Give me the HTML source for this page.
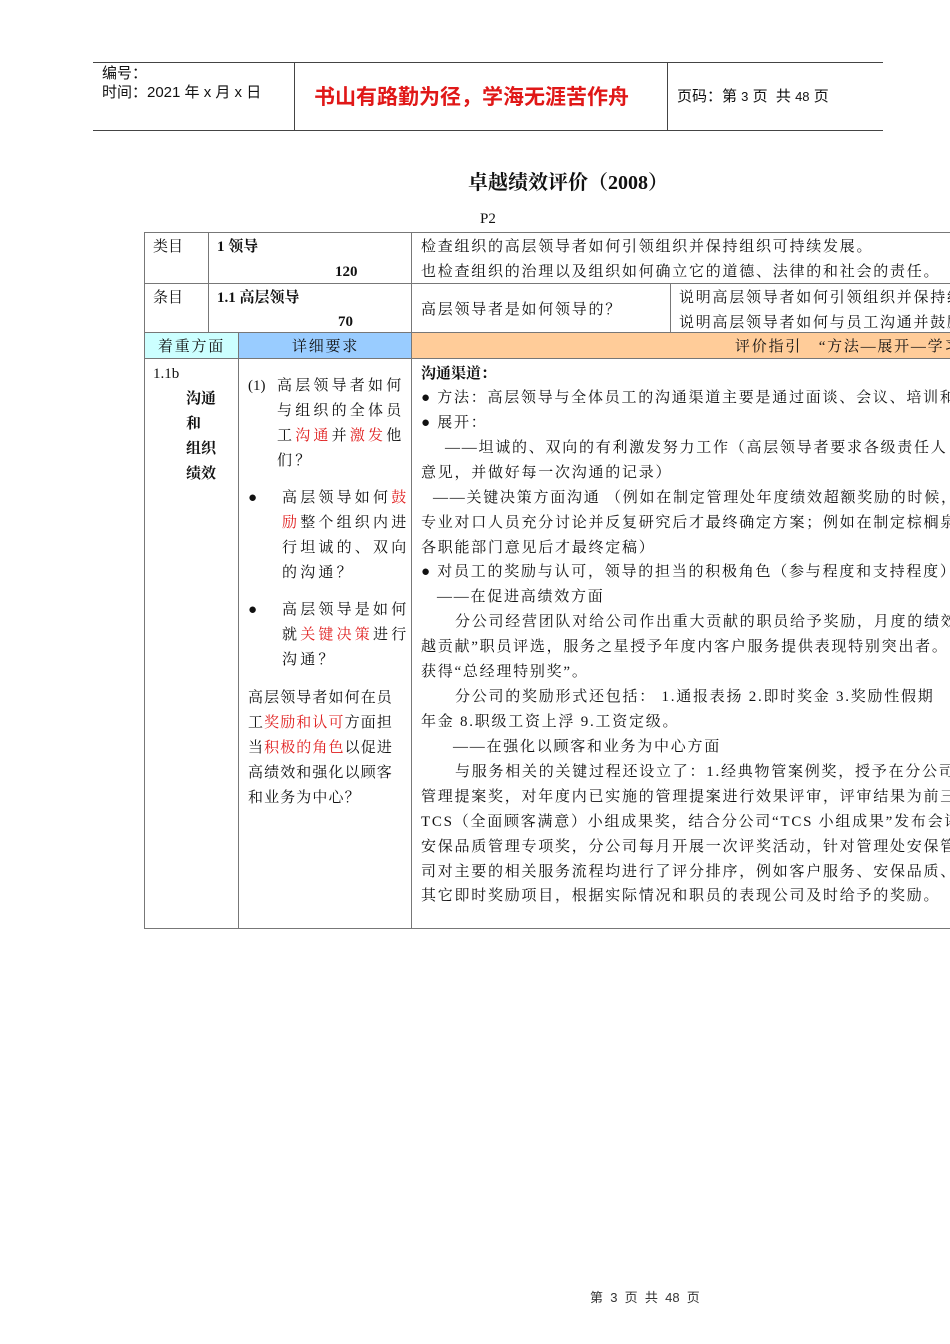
<!DOCTYPE html>
<html><head><meta charset="utf-8"><style>
html,body{margin:0;padding:0}
body{width:950px;height:1344px;position:relative;overflow:hidden;background:#fff;font-family:"Liberation Serif","Noto Serif CJK SC",serif;color:#111}
#w{position:absolute;left:0;top:0;width:950px;height:1344px;overflow:hidden}
#t{position:absolute;left:0;top:2px;width:950px;height:1342px}
.a{position:absolute;white-space:nowrap;line-height:20px;font-size:15px}
.m{letter-spacing:1.75px}
.s{font-family:"Liberation Sans","Noto Sans CJK SC",sans-serif}
.h{position:absolute;background:#777;height:1px}
.v{position:absolute;background:#777;width:1px}
.r{color:#e02020}
.l{letter-spacing:3.2px}
b{font-weight:bold}
</style></head><body><div id="w">
<!-- header -->
<div class="h" style="left:93px;top:62px;width:790px;background:#444"></div>
<div class="h" style="left:93px;top:130px;width:790px;background:#444"></div>
<div class="v" style="left:294px;top:62px;height:68px;background:#444"></div>
<div class="v" style="left:667px;top:62px;height:68px;background:#444"></div>
<div class="a s" style="left:102px;top:64px;font-size:15px">编号：</div>
<div class="a s" style="left:102px;top:83px;font-size:15px">时间：2021 年 x 月 x 日</div>
<div class="a s" style="left:314px;top:85px;font-size:21px;line-height:26px;color:#e01818;font-weight:bold">书山有路勤为径，学海无涯苦作舟</div>
<div class="a s" style="left:677px;top:87px;font-size:15px">页码：第 <span style="font-size:13px">3</span> 页&nbsp; 共 <span style="font-size:13px">48</span> 页</div>
<!-- title -->
<div class="a" style="left:468px;top:170px;font-size:20px;line-height:26px;font-weight:bold">卓越绩效评价（2008）</div>
<div class="a" style="left:480px;top:209px;font-size:15px">P2</div>
<!-- table fills -->
<div style="position:absolute;left:145px;top:333px;width:93px;height:25px;background:#ccffff"></div>
<div style="position:absolute;left:239px;top:333px;width:172px;height:25px;background:#99ccff"></div>
<div style="position:absolute;left:412px;top:333px;width:538px;height:25px;background:#ffcc99"></div>
<!-- table lines -->
<div class="h" style="left:144px;top:232px;width:806px"></div>
<div class="h" style="left:144px;top:283px;width:806px"></div>
<div class="h" style="left:144px;top:332px;width:806px"></div>
<div class="h" style="left:144px;top:358px;width:806px"></div>
<div class="h" style="left:144px;top:928px;width:806px"></div>
<div class="v" style="left:144px;top:232px;height:697px"></div>
<div class="v" style="left:208px;top:232px;height:100px"></div>
<div class="v" style="left:238px;top:332px;height:596px"></div>
<div class="v" style="left:411px;top:232px;height:696px"></div>
<div class="v" style="left:670px;top:283px;height:49px"></div>
<div id="t">
<!-- row 1 -->
<div class="a" style="left:153px;top:235px">类目</div>
<div class="a" style="left:217px;top:235px"><b>1 领导</b></div>
<div class="a" style="left:335px;top:260px"><b>120</b></div>
<div class="a m" style="left:421px;top:235px">检查组织的高层领导者如何引领组织并保持组织可持续发展。</div>
<div class="a m" style="left:421px;top:260px">也检查组织的治理以及组织如何确立它的道德、法律的和社会的责任。</div>
<!-- row 2 -->
<div class="a" style="left:153px;top:286px">条目</div>
<div class="a" style="left:217px;top:286px"><b>1.1 高层领导</b></div>
<div class="a" style="left:338px;top:310px"><b>70</b></div>
<div class="a m" style="left:421px;top:298px">高层领导者是如何领导的？</div>
<div class="a m" style="left:679px;top:286px">说明高层领导者如何引领组织并保持组织</div>
<div class="a m" style="left:679px;top:311px">说明高层领导者如何与员工沟通并鼓励</div>
<!-- row 3 headers -->
<div class="a m" style="left:158px;top:335px">着重方面</div>
<div class="a m" style="left:292px;top:335px">详细要求</div>
<div class="a m" style="left:735px;top:335px">评价指引　“方法—展开—学习—整合”</div>
<!-- col 1 -->
<div class="a" style="left:153px;top:362px">1.1b</div>
<div class="a" style="left:186px;top:387px;font-weight:bold">沟通</div>
<div class="a" style="left:186px;top:412px;font-weight:bold">和</div>
<div class="a" style="left:186px;top:437px;font-weight:bold">组织</div>
<div class="a" style="left:186px;top:462px;font-weight:bold">绩效</div>
<!-- col 2 -->
<div class="a" style="left:248px;top:374px">(1)</div>
<div class="a l" style="left:277px;top:374px">高层领导者如何</div>
<div class="a l" style="left:277px;top:399px">与组织的全体员</div>
<div class="a l" style="left:277px;top:424px">工<span class="r">沟通</span>并<span class="r">激发</span>他</div>
<div class="a l" style="left:277px;top:449px">们？</div>
<div class="a" style="left:248px;top:486px">●</div>
<div class="a l" style="left:282px;top:486px">高层领导如何<span class="r">鼓</span></div>
<div class="a l" style="left:282px;top:511px"><span class="r">励</span>整个组织内进</div>
<div class="a l" style="left:282px;top:536px">行坦诚的、双向</div>
<div class="a l" style="left:282px;top:561px">的沟通？</div>
<div class="a" style="left:248px;top:598px">●</div>
<div class="a l" style="left:282px;top:598px">高层领导是如何</div>
<div class="a l" style="left:282px;top:623px">就<span class="r">关键决策</span>进行</div>
<div class="a l" style="left:282px;top:648px">沟通？</div>
<div class="a" style="left:248px;top:686px;letter-spacing:1.1px">高层领导者如何在员</div>
<div class="a" style="left:248px;top:711px;letter-spacing:1.1px">工<span class="r">奖励和认可</span>方面担</div>
<div class="a" style="left:248px;top:736px;letter-spacing:1.1px">当<span class="r">积极的角色</span>以促进</div>
<div class="a" style="left:248px;top:761px;letter-spacing:1.1px">高绩效和强化以顾客</div>
<div class="a" style="left:248px;top:786px;letter-spacing:1.1px">和业务为中心？</div>
<!-- col 3 -->
<div class="a" style="left:421px;top:362px;font-weight:bold">沟通渠道：</div>
<div class="a m" style="left:421px;top:386px">● 方法：高层领导与全体员工的沟通渠道主要是通过面谈、会议、培训和</div>
<div class="a m" style="left:421px;top:411px">● 展开：</div>
<div class="a m" style="left:445px;top:436px">——坦诚的、双向的有利激发努力工作（高层领导者要求各级责任人</div>
<div class="a m" style="left:421px;top:461px">意见，并做好每一次沟通的记录）</div>
<div class="a m" style="left:433px;top:486px">——关键决策方面沟通 （例如在制定管理处年度绩效超额奖励的时候，</div>
<div class="a m" style="left:421px;top:511px">专业对口人员充分讨论并反复研究后才最终确定方案；例如在制定棕榈泉</div>
<div class="a m" style="left:421px;top:536px">各职能部门意见后才最终定稿）</div>
<div class="a m" style="left:421px;top:560px">● 对员工的奖励与认可，领导的担当的积极角色（参与程度和支持程度）</div>
<div class="a m" style="left:437px;top:585px">——在促进高绩效方面</div>
<div class="a m" style="left:455px;top:610px">分公司经营团队对给公司作出重大贡献的职员给予奖励，月度的绩效</div>
<div class="a m" style="left:421px;top:635px">越贡献”职员评选，服务之星授予年度内客户服务提供表现特别突出者。</div>
<div class="a m" style="left:421px;top:660px">获得“总经理特别奖”。</div>
<div class="a m" style="left:455px;top:685px">分公司的奖励形式还包括： 1.通报表扬 2.即时奖金 3.奖励性假期</div>
<div class="a m" style="left:421px;top:710px">年金 8.职级工资上浮 9.工资定级。</div>
<div class="a m" style="left:453px;top:735px">——在强化以顾客和业务为中心方面</div>
<div class="a m" style="left:455px;top:760px">与服务相关的关键过程还设立了：1.经典物管案例奖，授予在分公司</div>
<div class="a m" style="left:421px;top:785px">管理提案奖，对年度内已实施的管理提案进行效果评审，评审结果为前三</div>
<div class="a m" style="left:421px;top:810px">TCS（全面顾客满意）小组成果奖，结合分公司“TCS 小组成果”发布会评</div>
<div class="a m" style="left:421px;top:835px">安保品质管理专项奖，分公司每月开展一次评奖活动，针对管理处安保管</div>
<div class="a m" style="left:421px;top:860px">司对主要的相关服务流程均进行了评分排序，例如客户服务、安保品质、</div>
<div class="a m" style="left:421px;top:884px">其它即时奖励项目，根据实际情况和职员的表现公司及时给予的奖励。</div>
<!-- footer -->
<div class="a s" style="left:590px;top:1286px;font-size:13px;color:#333">第&nbsp; 3&nbsp; 页&nbsp; 共&nbsp; 48&nbsp; 页</div>
</div>
</div></body></html>
